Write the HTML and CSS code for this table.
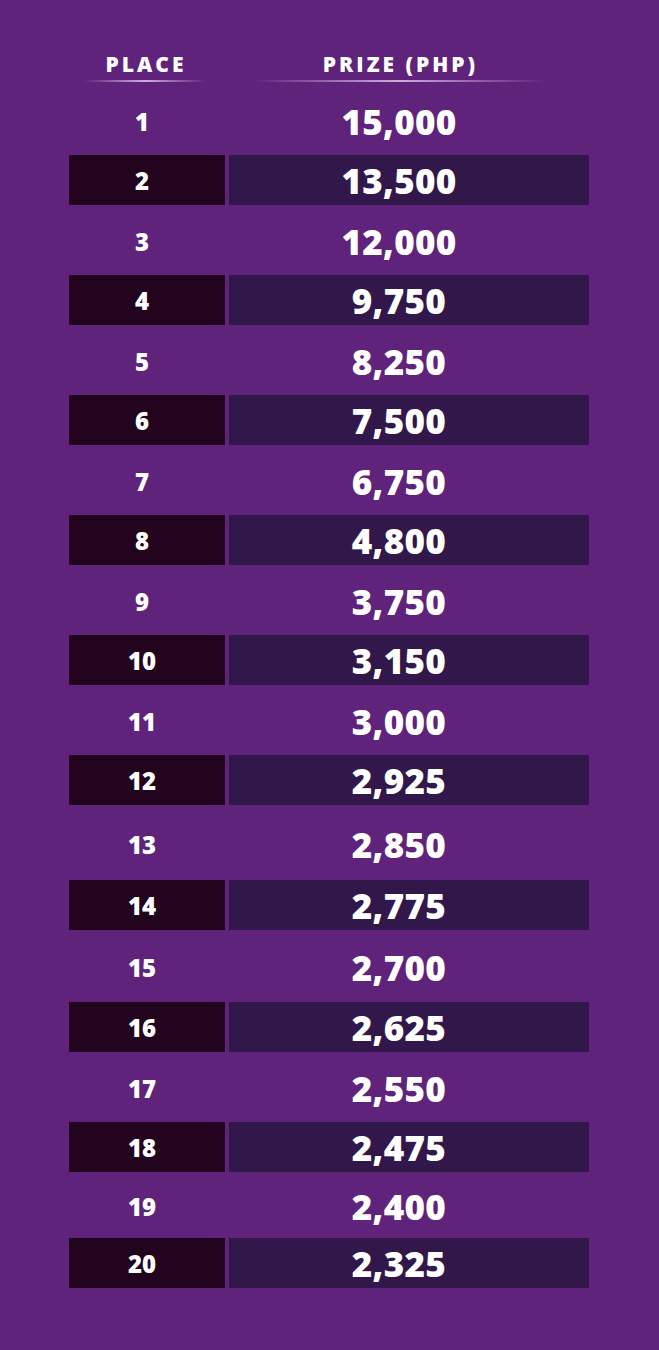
FILE: index.html
```html
<!DOCTYPE html>
<html lang="en">
<head>
<meta charset="utf-8">
<title>Prize Table</title>
<link rel="stylesheet" href="styles.css">
</head>
<body>
<main class="page">
  <div class="table">
    <div class="head">
      <div class="head-cell head-place"><span class="head-text">PLACE</span><span class="rule"></span></div>
      <div class="head-cell head-prize"><span class="head-text">PRIZE (PHP)</span><span class="rule"></span></div>
    </div>
    <div class="row light"><div class="place">1</div><div class="prize">15,000</div></div>
    <div class="row dark"><div class="place">2</div><div class="prize">13,500</div></div>
    <div class="row light"><div class="place">3</div><div class="prize">12,000</div></div>
    <div class="row dark"><div class="place">4</div><div class="prize">9,750</div></div>
    <div class="row light"><div class="place">5</div><div class="prize">8,250</div></div>
    <div class="row dark"><div class="place">6</div><div class="prize">7,500</div></div>
    <div class="row light"><div class="place">7</div><div class="prize">6,750</div></div>
    <div class="row dark"><div class="place">8</div><div class="prize">4,800</div></div>
    <div class="row light"><div class="place">9</div><div class="prize">3,750</div></div>
    <div class="row dark"><div class="place">10</div><div class="prize">3,150</div></div>
    <div class="row light"><div class="place">11</div><div class="prize">3,000</div></div>
    <div class="row dark"><div class="place">12</div><div class="prize">2,925</div></div>
    <div class="row light tall"><div class="place">13</div><div class="prize">2,850</div></div>
    <div class="row dark"><div class="place">14</div><div class="prize">2,775</div></div>
    <div class="row light mid"><div class="place">15</div><div class="prize">2,700</div></div>
    <div class="row dark"><div class="place">16</div><div class="prize">2,625</div></div>
    <div class="row light"><div class="place">17</div><div class="prize">2,550</div></div>
    <div class="row dark"><div class="place">18</div><div class="prize">2,475</div></div>
    <div class="row light short"><div class="place">19</div><div class="prize">2,400</div></div>
    <div class="row dark"><div class="place">20</div><div class="prize">2,325</div></div>
  </div>
</main>
</body>
</html>
```
FILE: styles.css
```css
html, body {
  margin: 0;
  padding: 0;
  background: #5f237b;
}
.page {
  width: 659px;
  height: 1350px;
  background: #5f237b;
  font-family: "Open Sans", "Liberation Sans", sans-serif;
  color: #ffffff;
  padding: 0 0 0 69px;
  box-sizing: border-box;
}
.table {
  width: 520px;
  display: flex;
  flex-direction: column;
}
.head {
  display: grid;
  grid-template-columns: 156px 360px;
  column-gap: 4px;
  height: 85px;
}
.head-cell {
  display: flex;
  flex-direction: column;
  align-items: center;
  padding-top: 52px;
  box-sizing: border-box;
}
.head-place { padding-right: 5px; }
.head-prize { padding-right: 20px; }
.head-text {
  font-size: 21px;
  font-weight: 800;
  letter-spacing: 3px;
  padding-left: 3px;
  line-height: 24px;
  height: 24px;
}
.rule {
  display: block;
  height: 2px;
  margin-top: 4px;
  background: linear-gradient(90deg, rgba(255,255,255,0) 0%, rgba(235,205,245,0.8) 50%, rgba(255,255,255,0) 100%);
}
.head-place .rule { width: 122px; }
.head-prize .rule { width: 294px; }
.row {
  display: grid;
  grid-template-columns: 156px 360px;
  column-gap: 4px;
}
.row.light { height: 70px; }
.row.light.tall { height: 75px; }
.row.light.mid { height: 72px; }
.row.light.short { height: 66px; }
.row.dark { height: 50px; }
.row.dark .place { background: #22041f; }
.row.dark .prize { background: #32174a; }
.place, .prize {
  display: flex;
  align-items: center;
  justify-content: center;
  font-weight: 800;
  box-sizing: border-box;
}
.place {
  font-size: 24px;
  padding-right: 10px;
}
.prize {
  font-size: 35px;
  letter-spacing: 0.3px;
  padding-right: 20px;
}
.row.light .place, .row.light .prize { padding-top: 3px; }
```
